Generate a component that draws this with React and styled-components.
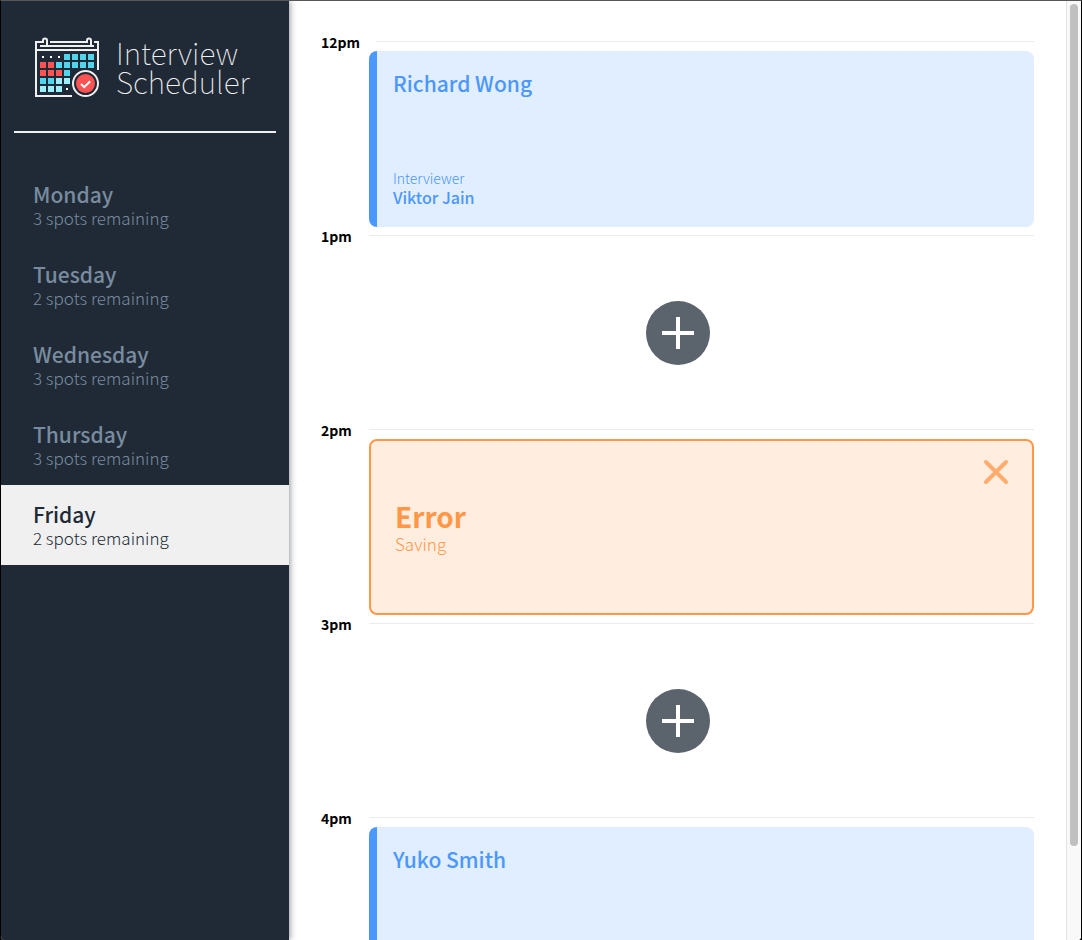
import React, { useState } from "react";
import styled, { createGlobalStyle, css } from "styled-components";

const GlobalStyle = createGlobalStyle`
  *, *::before, *::after { box-sizing: border-box; }
  body {
    margin: 0;
    background: #000;
    font-family: "Noto Sans CJK JP", "Noto Sans", sans-serif;
    -webkit-font-smoothing: antialiased;
  }
  button { font: inherit; border: 0; padding: 0; background: none; cursor: pointer; }
  h1, h2, h3, h4, p, ul { margin: 0; padding: 0; font-weight: 400; }
`;

const Window = styled.div`
  display: flex;
  height: 100vh;
  overflow: hidden;
  border: 1px solid #000;
  border-top-color: #56565a;
  border-bottom: 0;
  border-radius: 0 0 4px 4px;
  background: #fff;
`;

const Sidebar = styled.aside`
  flex: 0 0 288px;
  display: flex;
  flex-direction: column;
  z-index: 1;
  background: #202a36;
  box-shadow: 1px 0 6px rgba(32, 42, 54, 0.5);
`;

const Brand = styled.a`
  display: flex;
  align-items: flex-start;
  gap: 16px;
  height: 129px;
  padding: 35px 0 0 33px;
  color: #f0f0f0;
  text-decoration: none;
`;

const BrandName = styled.span`
  width: 150px;
  padding-top: 2px;
  font-size: 30px;
  font-weight: 100;
  line-height: 29px;
`;

const Divider = styled.hr`
  width: 262px;
  height: 2px;
  margin: 1px 13px 32px;
  border: 0;
  background: #f0f0f0;
`;

const DayList = styled.ul`
  list-style: none;
`;

const DayButton = styled.button`
  display: block;
  width: 100%;
  height: 80px;
  padding: 2px 32px 0;
  text-align: left;
  color: #798c9f;
  ${({ $selected }) =>
    $selected &&
    css`
      color: #202a36;
      background: #f0f0f0;
    `}
`;

const DayName = styled.span`
  display: block;
  font-size: 21px;
  font-weight: 500;
  line-height: 24px;
`;

const DaySpots = styled.span`
  display: block;
  font-size: 17px;
  font-weight: 300;
  line-height: 24px;
`;

const Schedule = styled.main`
  flex: 1;
  min-width: 0;
  overflow-y: auto;
  scrollbar-width: none;
  padding: 32px 32px 0;
`;

const Slot = styled.section`
  display: flex;
  flex-direction: column;
`;

const SlotHeader = styled.header`
  display: flex;
  align-items: center;
  gap: 16px;
  height: 18px;
`;

const Time = styled.h4`
  min-width: 32px;
  font-size: 14px;
  font-weight: 700;
  line-height: 18px;
  color: #000;
`;

const Rule = styled.hr`
  flex: 1;
  height: 1px;
  margin: 0 0 1px;
  border: 0;
  background: #ebebeb;
`;

const Empty = styled.div`
  display: flex;
  align-items: center;
  justify-content: center;
  height: 176px;
`;

const AddButton = styled.button`
  display: flex;
  align-items: center;
  justify-content: center;
  width: 64px;
  height: 64px;
  border-radius: 50%;
  background: #5b636c;
`;

const Card = styled.article`
  display: flex;
  flex-direction: column;
  height: 176px;
  margin-left: 48px;
  border-radius: 8px;
`;

const Appointment = styled(Card)`
  justify-content: space-between;
  padding: 16px 16px 20px;
  border-left: 8px solid #4a97fd;
  color: #4a97fd;
  background: #e1eeff;
`;

const Student = styled.h2`
  font-size: 21px;
  font-weight: 500;
  line-height: 32px;
`;

const Label = styled.h4`
  font-size: 14px;
  font-weight: 300;
  line-height: 18px;
`;

const Interviewer = styled.h3`
  font-size: 16px;
  font-weight: 500;
  line-height: 20px;
`;

const ErrorCard = styled(Card)`
  padding: 18px 23px 0 24px;
  border: 2px solid #ff9747;
  color: #ff9747;
  background: #ffeee0;
`;

const CloseButton = styled.button`
  display: block;
  align-self: flex-end;
  width: 26px;
  height: 26px;
  opacity: 0.75;
  color: inherit;
  svg { display: block; }
`;

const ErrorTitle = styled.h1`
  margin-top: 15px;
  font-size: 28px;
  font-weight: 700;
  line-height: 32px;
`;

const ErrorMessage = styled.p`
  font-size: 17px;
  font-weight: 300;
  line-height: 24px;
`;

const Track = styled.div`
  flex: 0 0 15px;
  padding: 3px 3px 0;
  border-left: 1px solid #e3e3e3;
  background: #f9f9f9;
`;

const Thumb = styled.div`
  width: 8px;
  height: 90%;
  border-radius: 4px;
  background: #c0c0c0;
`;

const CYAN = "#4fd5ee";
const PALE = "#9deefb";
const RED = "#ff5252";
const WEEKS = [
  [null, null, null, CYAN, CYAN, CYAN, CYAN],
  [RED, RED, CYAN, CYAN, CYAN, CYAN, CYAN],
  [RED, RED, RED, CYAN],
  [CYAN, CYAN, PALE, PALE],
  [PALE, PALE, PALE, null],
];

function CalendarLogo() {
  return (
    <svg width="66" height="62" viewBox="0 0 66 62" aria-hidden="true">
      <g fill="none" stroke="#f0f0f0" strokeWidth="2">
        <path d="M10 6H2V60H38M16 6H54M60 6H64V34M2 14H64M6 10H13V4.5a2 2 0 0 0-4 0V7M13 10H57V4.5a2 2 0 0 0-4 0V7M57 10H60" />
      </g>
      {WEEKS.map((week, r) =>
        week.map((fill, c) =>
          fill ? (
            <rect key={`${r}-${c}`} x={6 + c * 8} y={18 + r * 8} width="6" height="6" fill={fill} />
          ) : (
            <rect key={`${r}-${c}`} x={8 + c * 8} y={20 + r * 8} width="2" height="2" fill="#fff" />
          )
        )
      )}
      <circle cx="51.5" cy="47.5" r="12.5" fill="#202a36" stroke="#f0f0f0" strokeWidth="2" />
      <circle cx="51.5" cy="47.5" r="9.5" fill={RED} />
      <path d="M47 48l3.2 3.2 6-6" fill="none" stroke="#fff" strokeWidth="2" />
    </svg>
  );
}

const DAYS = [
  { name: "Monday", spots: 3 },
  { name: "Tuesday", spots: 2 },
  { name: "Wednesday", spots: 3 },
  { name: "Thursday", spots: 3 },
  { name: "Friday", spots: 2 },
];

const SLOTS = [
  { time: "12pm", student: "Richard Wong", interviewer: "Viktor Jain" },
  { time: "1pm" },
  { time: "2pm", error: "Saving" },
  { time: "3pm" },
  { time: "4pm", student: "Yuko Smith" },
];

function SlotBody({ slot }) {
  if (slot.error) {
    return (
      <ErrorCard>
        <CloseButton type="button" aria-label="Close">
          <svg width="26" height="26" viewBox="0 0 26 26" fill="none" stroke="currentColor" strokeWidth="4" strokeLinecap="round">
            <path d="M3 3L23 23M23 3L3 23" />
          </svg>
        </CloseButton>
        <ErrorTitle>Error</ErrorTitle>
        <ErrorMessage>{slot.error}</ErrorMessage>
      </ErrorCard>
    );
  }
  if (slot.student) {
    return (
      <Appointment>
        <Student>{slot.student}</Student>
        {slot.interviewer && (
          <div>
            <Label>Interviewer</Label>
            <Interviewer>{slot.interviewer}</Interviewer>
          </div>
        )}
      </Appointment>
    );
  }
  return (
    <Empty>
      <AddButton type="button" aria-label="Add appointment">
        <svg width="32" height="32" viewBox="0 0 32 32" stroke="#fff" strokeWidth="4">
          <path d="M16 0V32M0 16H32" />
        </svg>
      </AddButton>
    </Empty>
  );
}

export default function App() {
  const [day, setDay] = useState("Friday");
  return (
    <>
      <GlobalStyle />
      <Window>
        <Sidebar>
          <Brand href="#">
            <CalendarLogo />
            <BrandName>Interview Scheduler</BrandName>
          </Brand>
          <Divider />
          <nav>
            <DayList>
              {DAYS.map(({ name, spots }) => (
                <li key={name}>
                  <DayButton type="button" $selected={name === day} onClick={() => setDay(name)}>
                    <DayName>{name}</DayName>
                    <DaySpots>{spots} spots remaining</DaySpots>
                  </DayButton>
                </li>
              ))}
            </DayList>
          </nav>
        </Sidebar>
        <Schedule>
          {SLOTS.map((slot) => (
            <Slot key={slot.time}>
              <SlotHeader>
                <Time>{slot.time}</Time>
                <Rule />
              </SlotHeader>
              <SlotBody slot={slot} />
            </Slot>
          ))}
        </Schedule>
        <Track aria-hidden="true">
          <Thumb />
        </Track>
      </Window>
    </>
  );
}
